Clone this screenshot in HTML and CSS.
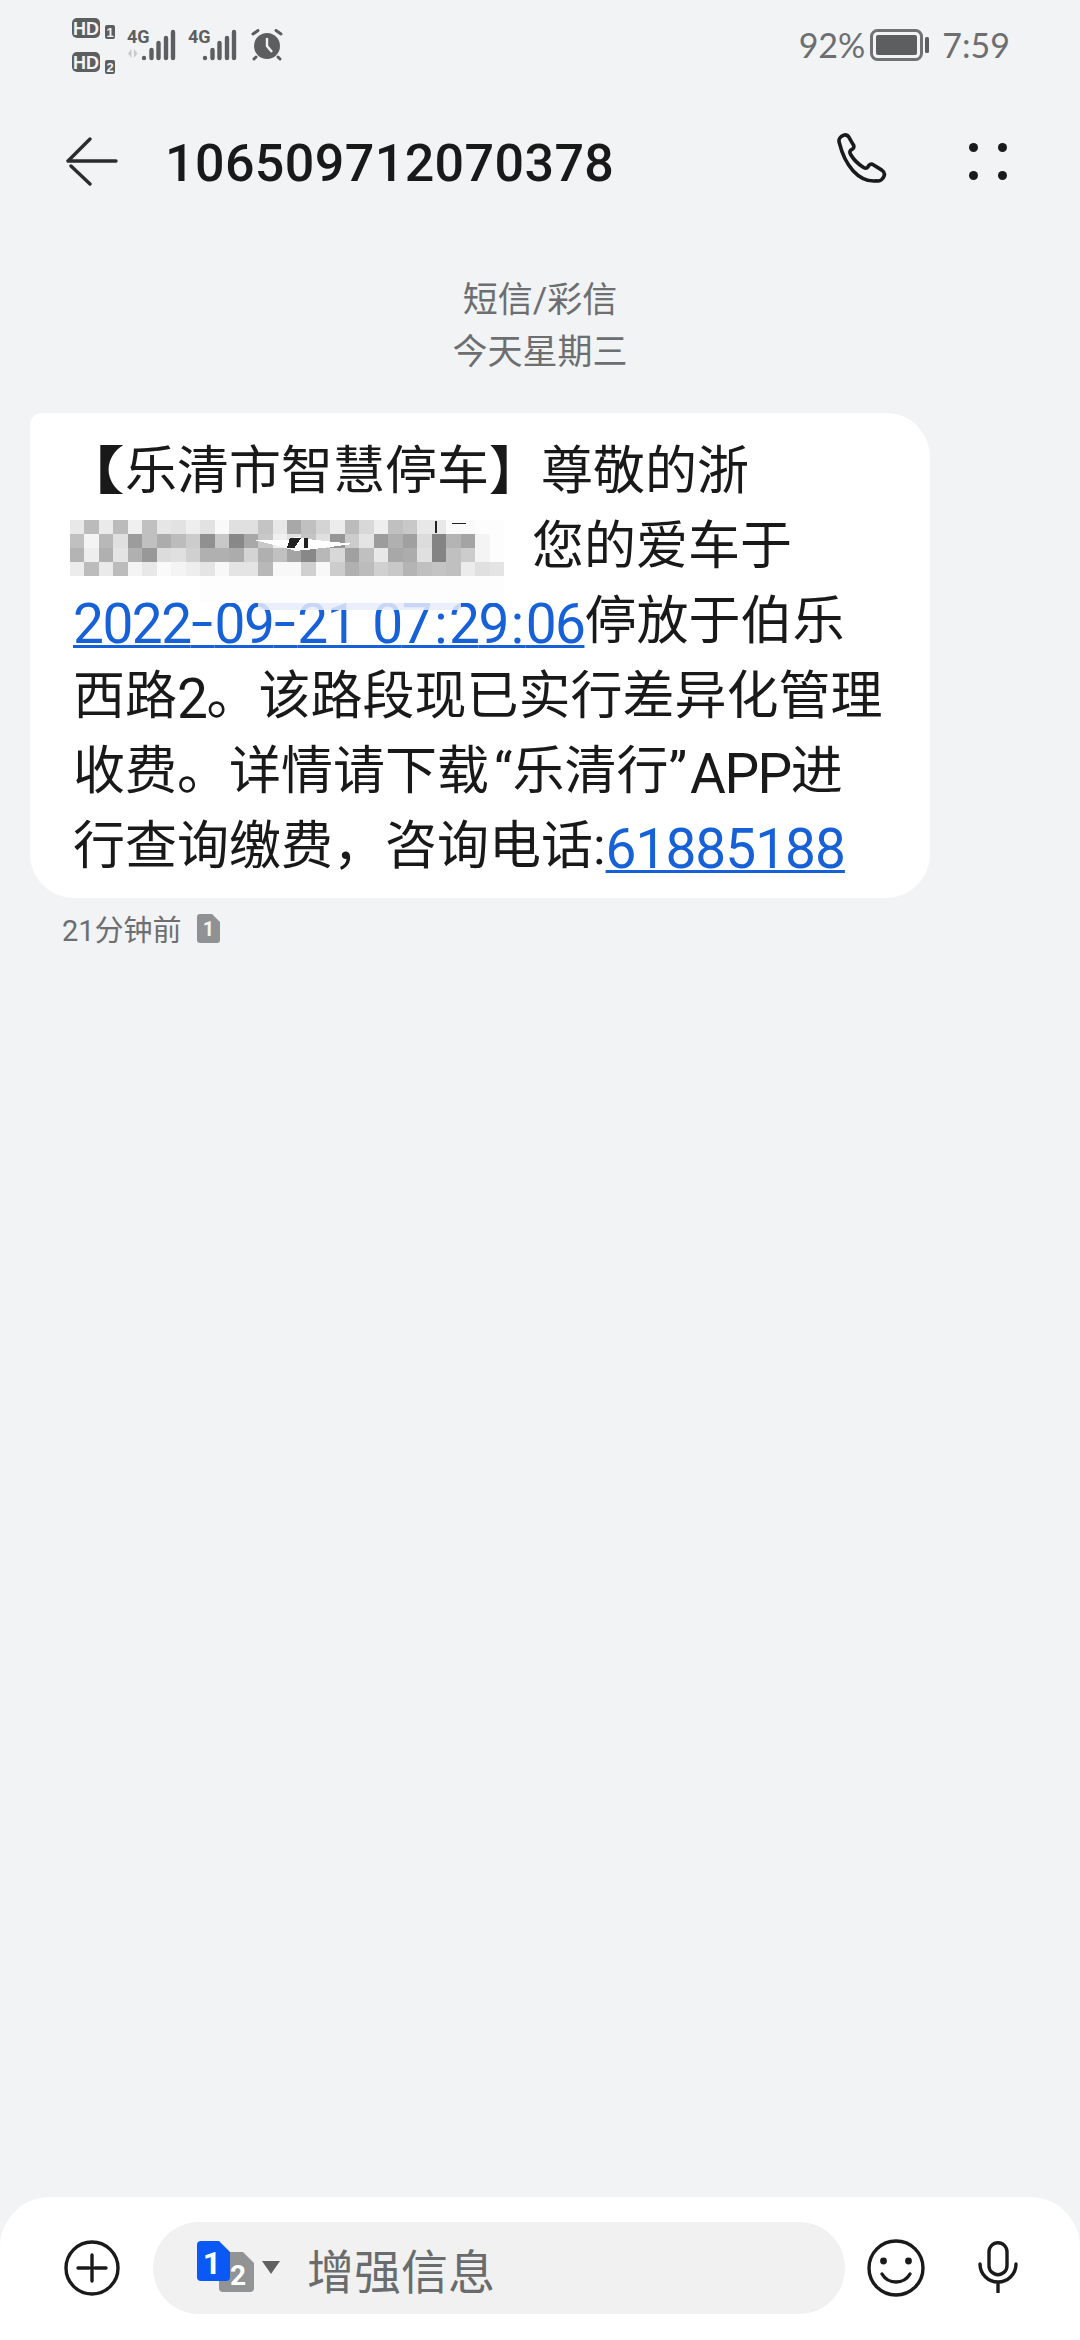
FILE: index.html
```html
<!DOCTYPE html>
<html lang="zh-CN">
<head>
  <meta charset="UTF-8">
  <meta name="viewport" content="width=device-width, initial-scale=1.0">
  <title>短信</title>
  <link rel="stylesheet" href="styles.css">
</head>
<body>
  <div class="status-bar">
    <div class="status-left">
      <svg class="ic-hd" viewBox="0 0 46 56" width="46" height="56">
        <rect x="0" y="0" width="28" height="20" rx="5" fill="#5c5e60"/>
        <text x="14" y="16.500" class="hd-text">HD</text>
        <rect x="33" y="7" width="10" height="14" rx="2" fill="#5c5e60"/>
        <text x="38" y="18.500" class="hd-num">1</text>
        <rect x="0" y="34" width="28" height="20" rx="5" fill="#5c5e60"/>
        <text x="14" y="50.500" class="hd-text">HD</text>
        <rect x="33" y="42" width="10" height="14" rx="2" fill="#5c5e60"/>
        <text x="38" y="53.500" class="hd-num">2</text>
      </svg>
      <svg class="ic-sig" viewBox="0 -5 50 39" width="50" height="39">
        <text x="0" y="14" class="g-text">4G</text>
        <path d="M1 24.500l3.500-4.500v9zM7 20v9l3.500-4.500z" fill="#c8c9cb"/>
        <path d="M17 29v0M24.500 29v-8M31.500 29v-15M39 29v-20M46 29v-26" fill="none" stroke="#5c5e60" stroke-width="4.400" stroke-linecap="round"/>
      </svg>
      <svg class="ic-sig" viewBox="0 -5 50 39" width="50" height="39">
        <text x="0" y="14" class="g-text">4G</text>
        <path d="M17 29v0M24.500 29v-8M31.500 29v-15M39 29v-20M46 29v-26" fill="none" stroke="#5c5e60" stroke-width="4.400" stroke-linecap="round"/>
      </svg>
      <svg class="ic-alarm" viewBox="0 0 32 32" width="32" height="32">
        <circle cx="16" cy="17" r="13" fill="#5c5e60"/>
        <path d="M16 9v8l5 6" stroke="#f1f3f5" stroke-width="2.400" fill="none"/>
        <path d="M2 5l5-3.500M30 5l-5-3.500M5 28l-2 2M27 28l2 2" stroke="#5c5e60" stroke-width="3" stroke-linecap="round"/>
      </svg>
    </div>
    <div class="status-right">
      <span class="batt-num">92%</span>
      <svg class="ic-batt" viewBox="0 0 60 32" width="60" height="32">
        <rect x="1.500" y="1.500" width="50" height="29" rx="6" fill="none" stroke="#707274" stroke-width="3"/>
        <rect x="6" y="6" width="41" height="20" rx="2" fill="#5c5e60"/>
        <rect x="55" y="8" width="4" height="16" rx="1.500" fill="#5c5e60"/>
      </svg>
      <span class="clock">7:59</span>
    </div>
  </div>

  <div class="top-bar">
    <svg class="ic-back" viewBox="0 0 52 49" width="52" height="49">
      <path d="M24 2L2 24h48M5 29l19 18" fill="none" stroke="#2c2c2c" stroke-width="3.400" stroke-linecap="round" stroke-linejoin="round"/>
    </svg>
    <div class="title">106509712070378</div>
    <svg class="ic-phone" viewBox="0 0 50 52" width="54" height="56">
      <path d="M3 9c-1-3 1-6 4-7 2-.5 4 .5 5 2l4 7c1 1.500.5 3-1 4l-1.500 1c-1 1-1 2 0 4 3 5 7 9 12 12 2 1 3 1 4-.5l1-1.500c1-1 2.500-1.500 4-.5l8 5c2 1.500 3 3.500 2 5.500-1 3-4 5-7 4.500C21 46 8 30 3 9z" fill="none" stroke="#1a1a1a" stroke-width="3.400" stroke-linejoin="round"/>
    </svg>
    <div class="dots">
      <i></i><i></i><i></i><i></i>
    </div>
  </div>

  <div class="main">
    <div class="date-info">
      <div>短信/彩信</div>
      <div>今天星期三</div>
    </div>

    <div class="bubble">
      <b class="bracket open">【</b>乐清市智慧停车<b class="bracket">】</b>尊敬的浙<br>
      <span class="mosaic">
        <svg viewBox="0 0 30 6.400" width="434" height="90" preserveAspectRatio="none" shape-rendering="crispEdges">
          <path d="M0 0h30v4h-30zM9 4h21v1.900h-21z" fill="#fdfdfd"/>
          <path d="M13 5.900h14v.5h-14z" fill="#e6ecfa" opacity=".85"/>
          <g id="r1">
            <rect x="0" y="0" width="1" height="1" fill="#e8e8e8"/><rect x="1" y="0" width="1" height="1" fill="#bbbbbb"/><rect x="2" y="0" width="1" height="1" fill="#eaeaea"/><rect x="3" y="0" width="1" height="1" fill="#bbbbbb"/><rect x="4" y="0" width="1" height="1" fill="#f0f0f0"/><rect x="5" y="0" width="1" height="1" fill="#c0c0c0"/><rect x="6" y="0" width="1" height="1" fill="#e6e6e6"/><rect x="7" y="0" width="1" height="1" fill="#e2e2e2"/><rect x="8" y="0" width="1" height="1" fill="#eeeeee"/><rect x="9" y="0" width="1" height="1" fill="#e2e2e2"/><rect x="10" y="0" width="1" height="1" fill="#f9f9f9"/><rect x="11" y="0" width="1" height="1" fill="#e0e0e0"/><rect x="12" y="0" width="1" height="1" fill="#e0e0e0"/><rect x="13" y="0" width="1" height="1" fill="#c4c4c4"/><rect x="14" y="0" width="1" height="1" fill="#e8e8e8"/><rect x="15" y="0" width="1" height="1" fill="#a8a8a8"/><rect x="16" y="0" width="1" height="1" fill="#c0c0c0"/><rect x="17" y="0" width="1" height="1" fill="#d4d4d4"/><rect x="18" y="0" width="1" height="1" fill="#ececec"/><rect x="19" y="0" width="1" height="1" fill="#bbbbbb"/><rect x="20" y="0" width="1" height="1" fill="#d8d8d8"/><rect x="21" y="0" width="1" height="1" fill="#eeeeee"/><rect x="22" y="0" width="1" height="1" fill="#c0c0c0"/><rect x="23" y="0" width="1" height="1" fill="#c8c8c8"/><rect x="24" y="0" width="1" height="1" fill="#e8e8e8"/><rect x="25" y="0" width="1" height="1" fill="#e8e8e8"/><rect x="26" y="0" width="1" height="1" fill="#fafafa"/><rect x="27" y="0" width="1" height="1" fill="#fafafa"/><rect x="28" y="0" width="1" height="1" fill="#fdfdfd"/>
          </g>
          <g id="r2">
            <rect x="0" y="1" width="1" height="1" fill="#c0c0c0"/><rect x="1" y="1" width="1" height="1" fill="#f4f4f4"/><rect x="2" y="1" width="1" height="1" fill="#b8b8b8"/><rect x="3" y="1" width="1" height="1" fill="#e0e0e0"/><rect x="4" y="1" width="1" height="1" fill="#9c9c9c"/><rect x="5" y="1" width="1" height="1" fill="#c0c0c0"/><rect x="6" y="1" width="1" height="1" fill="#acacac"/><rect x="7" y="1" width="1" height="1" fill="#bcbcbc"/><rect x="8" y="1" width="1" height="1" fill="#cccccc"/><rect x="9" y="1" width="1" height="1" fill="#909090"/><rect x="10" y="1" width="1" height="1" fill="#c8c8c8"/><rect x="11" y="1" width="1" height="1" fill="#888888"/><rect x="12" y="1" width="1" height="1" fill="#a8a8a8"/><rect x="13" y="1" width="1" height="1" fill="#c8c8c8"/><rect x="14" y="1" width="1" height="1" fill="#f0f0f0"/><rect x="15" y="1" width="1" height="1" fill="#e0e0e0"/><rect x="16" y="1" width="1" height="1" fill="#c4c4c4"/><rect x="17" y="1" width="1" height="1" fill="#e0e0e0"/><rect x="18" y="1" width="1" height="1" fill="#969696"/><rect x="19" y="1" width="1" height="1" fill="#cccccc"/><rect x="20" y="1" width="1" height="1" fill="#e4e4e4"/><rect x="21" y="1" width="1" height="1" fill="#9c9c9c"/><rect x="22" y="1" width="1" height="1" fill="#b0b0b0"/><rect x="23" y="1" width="1" height="1" fill="#a0a0a0"/><rect x="24" y="1" width="1" height="1" fill="#dcdcdc"/><rect x="25" y="1" width="1" height="1" fill="#848484"/><rect x="26" y="1" width="1" height="1" fill="#b4b4b4"/><rect x="27" y="1" width="1" height="1" fill="#a4a4a4"/><rect x="28" y="1" width="1" height="1" fill="#f4f4f4"/>
          </g>
          <g id="r3">
            <rect x="0" y="2" width="1" height="1" fill="#b4b4b4"/><rect x="1" y="2" width="1" height="1" fill="#eeeeee"/><rect x="2" y="2" width="1" height="1" fill="#b0b0b0"/><rect x="3" y="2" width="1" height="1" fill="#e4e4e4"/><rect x="4" y="2" width="1" height="1" fill="#b0b0b0"/><rect x="5" y="2" width="1" height="1" fill="#989898"/><rect x="6" y="2" width="1" height="1" fill="#dcdcdc"/><rect x="7" y="2" width="1" height="1" fill="#e0e0e0"/><rect x="8" y="2" width="1" height="1" fill="#d0d0d0"/><rect x="9" y="2" width="1" height="1" fill="#b0b0b0"/><rect x="10" y="2" width="1" height="1" fill="#b0b0b0"/><rect x="11" y="2" width="1" height="1" fill="#acacac"/><rect x="12" y="2" width="1" height="1" fill="#d4d4d4"/><rect x="13" y="2" width="1" height="1" fill="#b0b0b0"/><rect x="14" y="2" width="1" height="1" fill="#c0c0c0"/><rect x="15" y="2" width="1" height="1" fill="#a4a4a4"/><rect x="16" y="2" width="1" height="1" fill="#888888"/><rect x="17" y="2" width="1" height="1" fill="#b8b8b8"/><rect x="18" y="2" width="1" height="1" fill="#d8d8d8"/><rect x="19" y="2" width="1" height="1" fill="#a0a0a0"/><rect x="20" y="2" width="1" height="1" fill="#c0c0c0"/><rect x="21" y="2" width="1" height="1" fill="#e8e8e8"/><rect x="22" y="2" width="1" height="1" fill="#a8a8a8"/><rect x="23" y="2" width="1" height="1" fill="#acacac"/><rect x="24" y="2" width="1" height="1" fill="#e0e0e0"/><rect x="25" y="2" width="1" height="1" fill="#848484"/><rect x="26" y="2" width="1" height="1" fill="#c0c0c0"/><rect x="27" y="2" width="1" height="1" fill="#cccccc"/><rect x="28" y="2" width="1" height="1" fill="#f4f4f4"/>
          </g>
          <g id="r4">
            <rect x="0" y="3" width="1" height="1" fill="#ececec"/><rect x="1" y="3" width="1" height="1" fill="#bcbcbc"/><rect x="2" y="3" width="1" height="1" fill="#eaeaea"/><rect x="3" y="3" width="1" height="1" fill="#bcbcbc"/><rect x="4" y="3" width="1" height="1" fill="#f4f4f4"/><rect x="5" y="3" width="1" height="1" fill="#e8e8e8"/><rect x="6" y="3" width="1" height="1" fill="#fafafa"/><rect x="7" y="3" width="1" height="1" fill="#f4f4f4"/><rect x="8" y="3" width="1" height="1" fill="#eeeeee"/><rect x="9" y="3" width="1" height="1" fill="#e4e4e4"/><rect x="10" y="3" width="1" height="1" fill="#f8f8f8"/><rect x="11" y="3" width="1" height="1" fill="#e4e4e4"/><rect x="12" y="3" width="1" height="1" fill="#e4e4e4"/><rect x="13" y="3" width="1" height="1" fill="#b8b8b8"/><rect x="14" y="3" width="1" height="1" fill="#f8f8f8"/><rect x="15" y="3" width="1" height="1" fill="#f8f8f8"/><rect x="16" y="3" width="1" height="1" fill="#d0d0d0"/><rect x="17" y="3" width="1" height="1" fill="#f8f8f8"/><rect x="18" y="3" width="1" height="1" fill="#cccccc"/><rect x="19" y="3" width="1" height="1" fill="#b0b0b0"/><rect x="20" y="3" width="1" height="1" fill="#bcbcbc"/><rect x="21" y="3" width="1" height="1" fill="#d0d0d0"/><rect x="22" y="3" width="1" height="1" fill="#c8c8c8"/><rect x="23" y="3" width="1" height="1" fill="#b4b4b4"/><rect x="24" y="3" width="1" height="1" fill="#c0c0c0"/><rect x="25" y="3" width="1" height="1" fill="#c4c4c4"/><rect x="26" y="3" width="1" height="1" fill="#c0c0c0"/><rect x="27" y="3" width="1" height="1" fill="#ececec"/><rect x="28" y="3" width="1" height="1" fill="#e0e0e0"/><rect x="29" y="3" width="1" height="1" fill="#e4e4e4"/>
          </g>
          <path d="M12.600 1.400h2.500l.5-.2 1.200.2 2.800.3-3 .4-1 .1-1-.3z" fill="#ffffff"/>
          <path d="M15.200 1.250h.8l-.5 .75h-.5zM16.200 1.300h.25v.7h-.25zM25.200 .1h.2v.8h-.2zM26.400 .2h1v.1h-1z" fill="#222222"/>
        </svg>
      </span>您的爱车于<br>
      <a class="link link-date">2022<span class="dash">-</span>09<span class="dash">-</span>21 0<span class="wide">7:</span>2<span class="wide">9:</span>06</a>停放于伯乐<br>
      西路<span class="latin">2</span>。该路段现已实行差异化管理<br>
      收费。详情请下载<span class="quote-l">“</span>乐清行<span class="quote-r">”</span><span class="latin">APP</span>进<br>
      行查询缴费，咨询电话:<a class="link">61885188</a>
    </div>

    <div class="msg-meta">
      <span>21分钟前</span>
      <svg class="ic-sim" viewBox="0 0 23 29" width="23" height="29">
        <path d="M3 0h12l8 8v18a3 3 0 0 1-3 3H3a3 3 0 0 1-3-3V3a3 3 0 0 1 3-3z" fill="#8f9193"/>
        <text x="11.500" y="22" class="sim-num">1</text>
      </svg>
    </div>
  </div>

  <div class="bottom-bar">
    <svg class="ic-plus" viewBox="0 0 56 56" width="56" height="56">
      <circle cx="28" cy="28" r="26" fill="none" stroke="#1a1a1a" stroke-width="3.400"/>
      <path d="M14 28h11M31 28h11M28 15v26" fill="none" stroke="#1a1a1a" stroke-width="3.400" stroke-linecap="round"/>
    </svg>
    <div class="input-pill">
      <svg class="ic-sim2" viewBox="0 0 84 52" width="84" height="52">
        <path d="M26 11h20l11 11v25a4 4 0 0 1-4 4H26a4 4 0 0 1-4-4V15a4 4 0 0 1 4-4z" fill="#929395"/>
        <text x="41" y="44" class="sim2-num two">2</text>
        <path d="M4 0h18l11 11v25a4 4 0 0 1-4 4H4a4 4 0 0 1-4-4V4a4 4 0 0 1 4-4z" fill="#0a59f7"/>
        <text x="15" y="33" class="sim2-num">1</text>
        <path d="M65 20h18l-9 13z" fill="#5f6163"/>
      </svg>
      <span class="placeholder">增强信息</span>
    </div>
    <svg class="ic-smile" viewBox="0 0 58 58" width="58" height="58">
      <circle cx="29" cy="29" r="27" fill="none" stroke="#1a1a1a" stroke-width="3.400"/>
      <circle cx="16.500" cy="22" r="3.400" fill="#1a1a1a"/>
      <circle cx="41.500" cy="22" r="3.400" fill="#1a1a1a"/>
      <path d="M15 35c3 5 8 8 14 8s11-3 14-8" fill="none" stroke="#1a1a1a" stroke-width="3.400" stroke-linecap="round"/>
    </svg>
    <svg class="ic-mic" viewBox="0 0 40 52" width="40" height="52">
      <rect x="11" y="1.700" width="18" height="32" rx="9" fill="none" stroke="#1a1a1a" stroke-width="3.400"/>
      <path d="M2 23c0 10 8 18 18 18s18-8 18-18M20 41v10" fill="none" stroke="#1a1a1a" stroke-width="3.400" stroke-linecap="round"/>
    </svg>
  </div>
</body>
</html>
```
FILE: styles.css
```css
* {
  box-sizing: border-box;
}
html, body {
  margin: 0;
  padding: 0;
}
body {
  width: 1080px;
  height: 2340px;
  background-color: #f1f3f5;
  font-family: Roboto, "Noto Sans CJK SC", sans-serif;
  color: #191919;
  display: flex;
  flex-direction: column;
  overflow: hidden;
}

/* status bar */
.status-bar {
  height: 90px;
  padding: 18px 70px 0 72px;
  display: flex;
  justify-content: space-between;
  align-items: flex-start;
  flex-shrink: 0;
}
.status-left {
  display: flex;
  align-items: flex-start;
}
.ic-hd {
  margin-right: 9px;
}
.ic-sig {
  margin-top: 6px;
  margin-right: 11px;
}
.ic-alarm {
  margin-top: 11px;
  margin-left: 2px;
}
.hd-text {
  font: 700 18px "Liberation Sans", sans-serif;
  fill: #f1f3f5;
  text-anchor: middle;
}
.hd-num {
  font: 700 13px "Liberation Sans", sans-serif;
  fill: #f1f3f5;
  text-anchor: middle;
}
.g-text {
  font: 700 18px Roboto, sans-serif;
  fill: #5c5e60;
}
.status-right {
  display: flex;
  align-items: center;
  margin-top: 11px;
  color: #6c6e70;
  font-family: Lato, sans-serif;
  font-size: 34px;
  font-weight: 400;
  line-height: 32px;
}
.ic-batt {
  margin-left: 5px;
  margin-right: 12px;
}

/* top bar */
.top-bar {
  height: 142px;
  padding: 0 73px 0 66px;
  display: flex;
  align-items: center;
  flex-shrink: 0;
}
.title {
  flex: 1;
  margin: 5px 0 0 47px;
  font-size: 52px;
  font-weight: 500;
  letter-spacing: .4px;
}
.ic-phone {
  margin-right: 79px;
}
.dots {
  width: 38px;
  height: 37px;
  display: grid;
  grid-template-columns: 9px 9px;
  justify-content: space-between;
  align-content: space-between;
}
.dots i {
  width: 9px;
  height: 9px;
  border-radius: 50%;
  background-color: #1a1a1a;
}

/* message area */
.main {
  flex: 1;
}
.date-info {
  padding-top: 43px;
  text-align: center;
  font-size: 35px;
  line-height: 52px;
  color: #6c6e70;
}
.bubble {
  width: 900px;
  margin: 34px 0 0 30px;
  padding: 21px 0 14px 43px;
  background-color: #ffffff;
  border-radius: 12px 44px 44px 44px;
  font-size: 52px;
  line-height: 75px;
  white-space: nowrap;
}
.bracket {
  font-weight: 700;
}
.bracket.open {
  display: inline-block;
  transform: scaleX(1.4);
  transform-origin: right center;
}
/* 숫자/영문은 한자보다 조금 크고 아래쪽에 놓임 */
.latin,
.link {
  font-size: 55px;
  line-height: 0;
  vertical-align: -4px;
}
.latin {
  letter-spacing: -1.5px;
}
.quote-l {
  margin-left: 5px;
}
.quote-r {
  margin-right: 3px;
}
.mosaic {
  display: inline-block;
  position: relative;
  width: 459px;
  height: 1em;
}
.mosaic svg {
  position: absolute;
  left: -3px;
  top: 8px;
}
.link {
  color: #1761d8;
  text-decoration: underline;
  text-decoration-thickness: 3px;
  text-underline-offset: 2px;
  letter-spacing: -1px;
}
.link-date {
  letter-spacing: -1.5px;
  word-spacing: 4px;
}
.dash {
  font-size: 80px;
  font-weight: 300;
  line-height: 0;
  letter-spacing: 1px;
  vertical-align: -6px;
}
.wide {
  letter-spacing: 1.5px;
}
.msg-meta {
  margin: 9px 0 0 62px;
  display: flex;
  align-items: center;
  gap: 15px;
  font-size: 29px;
  color: #6c6e70;
}
.sim-num {
  font: 700 20px Roboto, sans-serif;
  fill: #f1f3f5;
  text-anchor: middle;
}

/* bottom input */
.bottom-bar {
  height: 143px;
  padding: 25px 0 0 64px;
  display: flex;
  align-items: flex-start;
  flex-shrink: 0;
  background-color: #ffffff;
  border-radius: 50px 50px 0 0;
}
.ic-plus {
  margin-top: 18px;
}
.input-pill {
  width: 692px;
  height: 92px;
  margin-left: 33px;
  padding-left: 44px;
  display: flex;
  align-items: center;
  border-radius: 46px;
  background-color: #f1f1f1;
}
.ic-sim2 {
  margin-top: -2px;
}
.sim2-num {
  font: 700 32px Roboto, sans-serif;
  fill: #ffffff;
  text-anchor: middle;
}
.sim2-num.two {
  font-size: 28px;
}
.placeholder {
  margin-left: 26px;
  font-size: 47px;
  color: #696b6d;
}
.ic-smile {
  margin: 17px 0 0 22px;
}
.ic-mic {
  margin: 19px 0 0 53px;
}
```
